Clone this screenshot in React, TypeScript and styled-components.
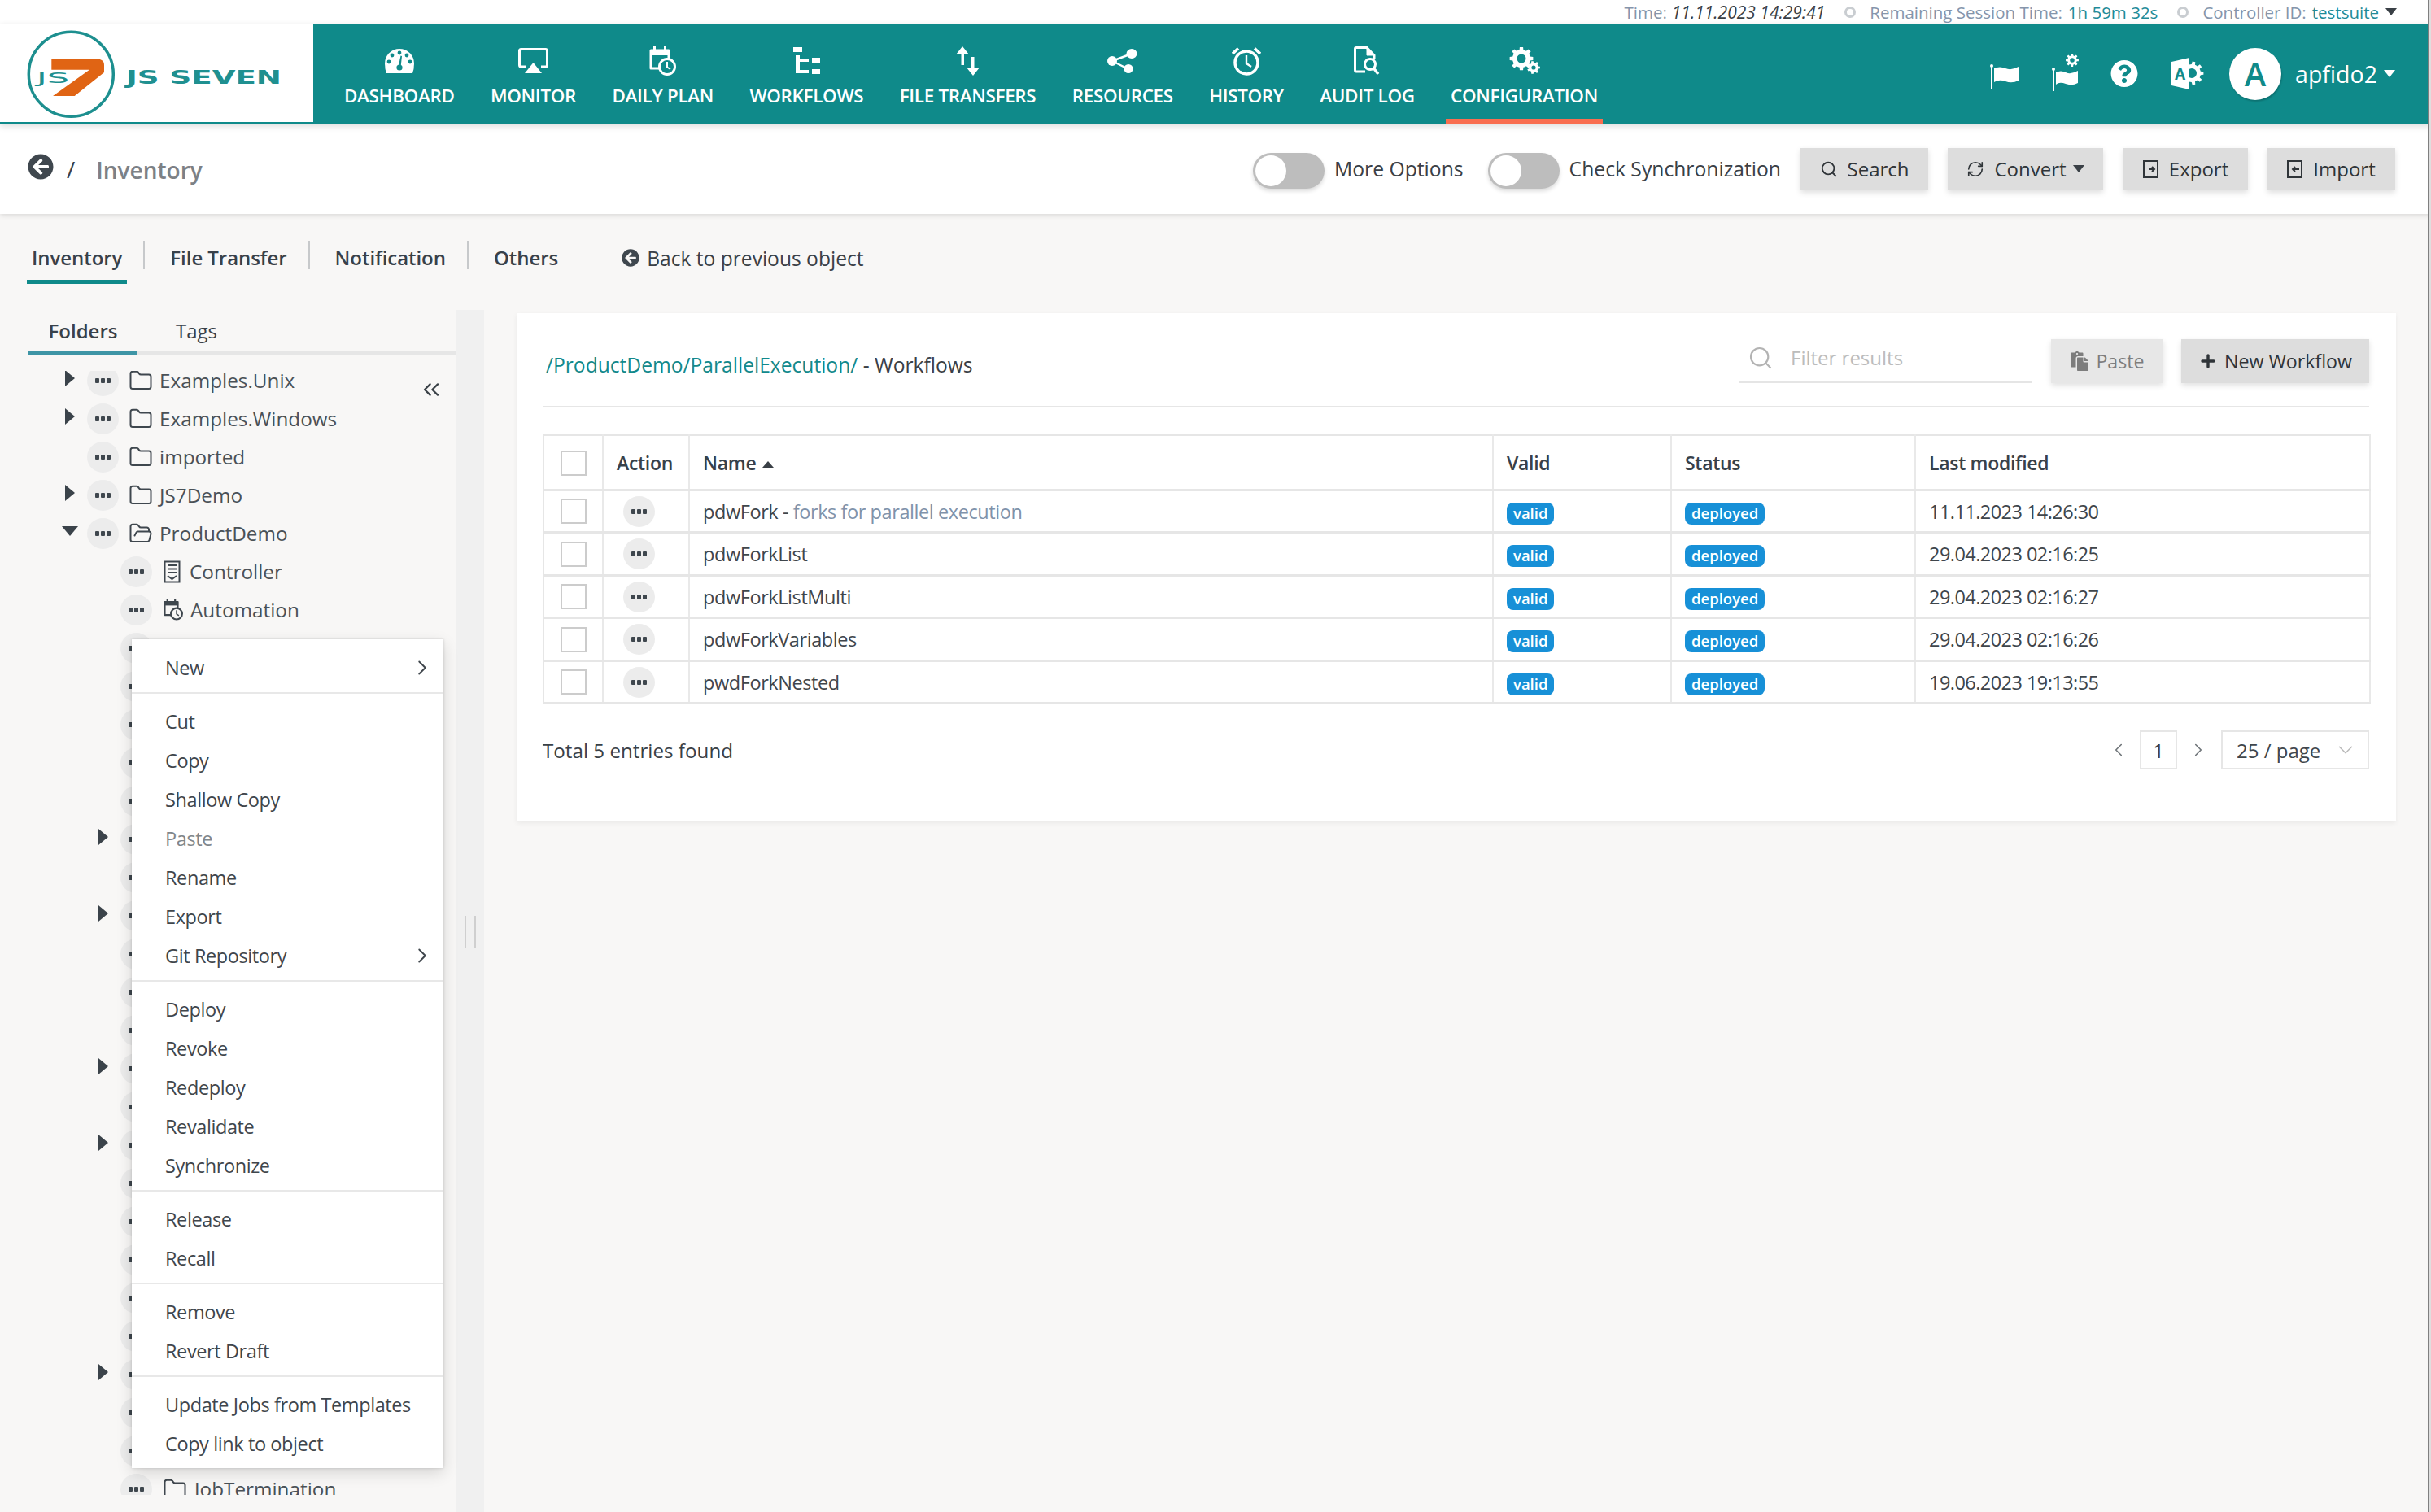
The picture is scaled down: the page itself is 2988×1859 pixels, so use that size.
import React from "react";
import styled, { createGlobalStyle } from "styled-components";
import { Search, RefreshCw, ChevronRight, ChevronLeft, ChevronDown, ChevronsLeft, Folder, FolderOpen, Plus } from "lucide-react";
import { FaArrowCircleLeft, FaQuestionCircle, FaPaste } from "react-icons/fa";

const TEAL = "#0f8a8a";

const Global = createGlobalStyle`
  html, body { margin: 0; padding: 0; background: #f8f7f6; overflow: hidden; }
  * { box-sizing: border-box; }
  body { font-family: "Open Sans", "Liberation Sans", sans-serif; font-size: 24px; color: #3a4046; }
`;

const Page = styled.div`
  position: relative;
  width: 2988px;
  height: 1859px;
  display: flex;
  flex-direction: column;
  overflow: hidden;
  background: #f8f7f6;
`;

/* top status strip */
const TopBar = styled.div`
  height: 29px;
  background: #fff;
  display: flex;
  align-items: center;
  justify-content: flex-end;
  padding-right: 42px;
  font-size: 20.5px;
  color: #8595ab;
  white-space: nowrap;
`;
const TimeValue = styled.i`
  color: #3a4046;
  margin-left: 6px;
  font-size: 21px;
`;
const StatusDot = styled.span`
  width: 14px;
  height: 14px;
  border-radius: 50%;
  border: 3px solid #c9cdd1;
  margin: 0 17px 0 24px;
`;
const TealValue = styled.span`
  color: #1f8b98;
  margin-left: 7px;
`;
const TinyCaret = styled.span<{ $c?: string; $ml?: number }>`
  width: 0;
  height: 0;
  border-left: 7px solid transparent;
  border-right: 7px solid transparent;
  border-top: 9px solid ${(p) => p.$c || "#3a4046"};
  margin-left: ${(p) => (p.$ml === undefined ? 8 : p.$ml)}px;
`;

/* header */
const Header = styled.header`
  height: 123px;
  display: flex;
  background: ${TEAL};
  box-shadow: 0 3px 8px rgba(0, 0, 0, 0.15);
  position: relative;
  z-index: 2;
`;
const LogoBox = styled.div`
  width: 385px;
  background: #fff;
  border-bottom: 2px solid ${TEAL};
  display: flex;
`;
const LogoSvg = styled.svg`
  width: 385px;
  height: 121px;
`;
const Nav = styled.nav`
  display: flex;
  gap: 32.4px;
  padding-left: 32px;
  flex: 1;
`;
const NavItem = styled.a<{ $active?: boolean }>`
  display: flex;
  flex-direction: column;
  align-items: center;
  padding: 27px 6px 0;
  height: 123px;
  color: #fff;
  border-bottom: 6px solid ${(p) => (p.$active ? "#f96e50" : "transparent")};
`;
const NavIcon = styled.div`
  height: 37px;
  display: flex;
  align-items: center;
  justify-content: center;
`;
const NavLabel = styled.span`
  margin-top: 10px;
  font-size: 22.4px;
  line-height: 30px;
  font-weight: 600;
  letter-spacing: -0.3px;
  white-space: nowrap;
`;
const NavRight = styled.div`
  display: flex;
  align-items: center;
  padding-right: 44px;
  color: #fff;
`;
const IconSlot = styled.div<{ $w: number; $mr: number; $mt?: number }>`
  width: ${(p) => p.$w}px;
  margin-right: ${(p) => p.$mr}px;
  margin-top: ${(p) => p.$mt || 0}px;
  display: flex;
  justify-content: center;
`;
const Avatar = styled.div`
  width: 64px;
  height: 64px;
  border-radius: 50%;
  background: #fff;
  color: ${TEAL};
  font-size: 40px;
  font-weight: 600;
  display: flex;
  align-items: center;
  justify-content: center;
  box-shadow: 1px 2px 2px rgba(0, 0, 0, 0.18);
  margin-right: 17px;
`;
const UserName = styled.span`
  font-size: 28.5px;
  color: #fff;
`;

/* sub bar */
const SubBar = styled.div`
  height: 111px;
  background: #fff;
  display: flex;
  align-items: center;
  box-shadow: 0 2px 6px rgba(0, 0, 0, 0.12);
  padding: 0 44px 0 34px;
  position: relative;
  z-index: 1;
`;
const BackIcon = styled(FaArrowCircleLeft)`
  width: 32px;
  height: 32px;
  color: #3f474e;
  margin-top: -6px;
`;
const Slash = styled.span`
  margin: 0 26px 0 16px;
  font-size: 28px;
  color: #3a4046;
`;
const CrumbTitle = styled.span`
  font-size: 28px;
  color: #7c8186;
  font-weight: 600;
  margin-top: 3px;
`;
const Spacer = styled.div`
  flex: 1;
`;
const Toggle = styled.div`
  width: 88px;
  height: 44px;
  border-radius: 22px;
  background: #bdbdbd;
  box-shadow: 0 3px 5px rgba(0, 0, 0, 0.14);
  padding: 3px;
  margin-top: 4px;
  display: flex;
`;
const Knob = styled.div`
  width: 38px;
  height: 38px;
  border-radius: 50%;
  background: #fff;
`;
const ToggleLabel = styled.span<{ $mr: number }>`
  font-size: 24.7px;
  margin: 0 ${(p) => p.$mr}px 0 12px;
  color: #3a4046;
  white-space: nowrap;
`;
const ToolButton = styled.button<{ $w: number; $mr?: number }>`
  width: ${(p) => p.$w}px;
  height: 52px;
  margin-right: ${(p) => p.$mr || 0}px;
  border: 0;
  background: #ddd;
  font: 400 24px "Open Sans", sans-serif;
  color: #2f3438;
  display: flex;
  align-items: center;
  justify-content: center;
  gap: 12px;
  padding: 0;
  box-shadow: 0 3px 7px rgba(0, 0, 0, 0.13);
  white-space: nowrap;
`;

/* tabs */
const Tabs = styled.div`
  display: flex;
  align-items: flex-start;
  padding: 33px 0 0 33px;
`;
const Tab = styled.a<{ $active?: boolean }>`
  height: 53px;
  padding: 4px 6px 0;
  line-height: 34px;
  font-size: 24px;
  font-weight: 600;
  letter-spacing: -0.05px;
  color: #38414a;
  border-bottom: 5px solid ${(p) => (p.$active ? TEAL : "transparent")};
`;
const TabDivider = styled.span`
  width: 2px;
  height: 35px;
  background: #c7c9cb;
  margin: 0 25px 0 20px;
`;
const BackLink = styled.a`
  display: flex;
  align-items: center;
  gap: 9px;
  margin-left: 72px;
  height: 42px;
  font-size: 24.6px;
  color: #3a4046;
`;
const SmallBack = styled(FaArrowCircleLeft)`
  width: 22px;
  height: 22px;
  color: #3f474e;
`;

/* main */
const Main = styled.div`
  flex: 1;
  display: flex;
  margin-top: 32px;
  min-height: 0;
`;
const LeftPanel = styled.aside`
  position: relative;
  width: 561px;
  padding-left: 35px;
  flex: none;
`;
const SideTabs = styled.div`
  display: flex;
  height: 55px;
  border-bottom: 4px solid #e6e6e6;
`;
const SideTab = styled.a<{ $active?: boolean }>`
  width: ${(p) => (p.$active ? 134 : 145)}px;
  height: 55px;
  text-align: center;
  line-height: 52px;
  font-size: 24px;
  font-weight: ${(p) => (p.$active ? 600 : 400)};
  color: #38414a;
  border-bottom: 4px solid ${(p) => (p.$active ? "#3e95a6" : "transparent")};
`;
const TreeClip = styled.div`
  margin: 20px 0 0 -35px;
  height: 1382px;
  overflow: hidden;
`;
const TreeList = styled.div`
  margin-top: -12px;
`;
const TreeRow = styled.div<{ $level: number }>`
  height: 47px;
  display: flex;
  align-items: center;
  padding-left: ${(p) => 78 + p.$level * 41}px;
  font-size: 24.3px;
  line-height: 20px;
  color: #4a5157;
  white-space: nowrap;
`;
const CaretBox = styled.div`
  width: 29px;
  height: 20px;
  display: flex;
  align-items: center;
  padding-left: 2px;
  margin-top: -6px;
`;
const CaretRight = styled.span`
  width: 0;
  height: 0;
  border-top: 10px solid transparent;
  border-bottom: 10px solid transparent;
  border-left: 12px solid #3b434a;
`;
const CaretDown = styled.span`
  width: 0;
  height: 0;
  margin-left: -4px;
  border-left: 10px solid transparent;
  border-right: 10px solid transparent;
  border-top: 12px solid #3b434a;
`;
const MoreBtn = styled.span`
  flex: none;
  width: 39px;
  height: 38px;
  border-radius: 50%;
  background: #ececec;
  display: inline-flex;
  align-items: center;
  justify-content: center;
  vertical-align: middle;
  gap: 2px;
`;
const Dot = styled.i`
  width: 5px;
  height: 6px;
  border-radius: 1px;
  background: #3f474e;
`;
const TreeIcon = styled.span<{ $ml: number; $mr: number }>`
  display: inline-flex;
  margin: 0 ${(p) => p.$mr}px 0 ${(p) => p.$ml}px;
  color: #3f474e;
`;
const Collapse = styled(ChevronsLeft)`
  position: absolute;
  left: 514px;
  top: 80px;
  width: 32px;
  height: 36px;
  color: #3a4147;
`;
const Gutter = styled.div`
  width: 34px;
  flex: none;
  background: #f0f0f0;
  display: flex;
  justify-content: center;
  gap: 10px;
  padding-top: 745px;
`;
const GripBar = styled.i`
  width: 2px;
  height: 40px;
  background: #cfcfcf;
`;

/* card */
const Card = styled.section`
  margin: 4px 43px 0 40px;
  flex: 1;
  min-width: 0;
  height: 625px;
  background: #fff;
  padding: 0 33px 0 32px;
  box-shadow: 0 2px 6px rgba(0, 0, 0, 0.06);
`;
const CardHead = styled.div`
  height: 116px;
  border-bottom: 2px solid #e6e6e6;
  display: flex;
  align-items: flex-start;
  padding: 32px 0 0 4px;
`;
const CardTitle = styled.div`
  font-size: 24.6px;
  line-height: 34px;
  color: #3a4046;
  flex: 1;
  margin-top: 15px;
`;
const PathLink = styled.a`
  color: #12898c;
`;
const FilterBox = styled.div`
  width: 359px;
  height: 54px;
  margin-right: 24px;
  border-bottom: 2px solid #e5e5e5;
  display: flex;
  align-items: center;
  padding: 0 0 7px 10px;
  gap: 18px;
  color: #b3b3b3;
`;
const FilterInput = styled.input`
  border: 0;
  outline: 0;
  width: 280px;
  font: 400 24px "Open Sans", sans-serif;
  background: transparent;
  padding-left: 3px;
  &::placeholder {
    color: #bcbcbc;
  }
`;
const CardButton = styled.button<{ $w: number; $muted?: boolean; $mr?: number }>`
  width: ${(p) => p.$w}px;
  height: 54px;
  margin-right: ${(p) => p.$mr || 0}px;
  border: 0;
  padding: 0;
  background: ${(p) => (p.$muted ? "#e7e7e7" : "#ddd")};
  color: ${(p) => (p.$muted ? "#7d7d7d" : "#2f3438")};
  font: 400 23.2px "Open Sans", sans-serif;
  display: flex;
  align-items: center;
  justify-content: center;
  gap: 8px;
  box-shadow: 0 3px 7px rgba(0, 0, 0, 0.12);
  white-space: nowrap;
`;
const Table = styled.table`
  margin-top: 33px;
  width: 100%;
  border-collapse: collapse;
  table-layout: fixed;
  border: 2px solid #e6e6e6;
`;
const Th = styled.th<{ $w: number }>`
  width: ${(p) => p.$w}px;
  height: 67px;
  padding: 2px 16px 0;
  text-align: left;
  font-size: 23px;
  font-weight: 600;
  letter-spacing: -0.3px;
  color: #38414a;
  border-right: 2px solid #e9e9e9;
  border-bottom: 3px solid #e6e6e6;
  white-space: nowrap;
`;
const Td = styled.td`
  height: 52.5px;
  padding: 1px 16px 0;
  font-size: 23.5px;
  letter-spacing: -0.42px;
  color: #3f464c;
  border-right: 2px solid #e9e9e9;
  border-bottom: 3px solid #e6e6e6;
  white-space: nowrap;
`;
const ActionTd = styled(Td)`
  padding-left: 24px;
`;
const DateTd = styled(Td)`
  letter-spacing: -0.55px;
`;
const SortUp = styled.span`
  display: inline-block;
  width: 0;
  height: 0;
  margin-left: 8px;
  vertical-align: 3px;
  border-left: 7px solid transparent;
  border-right: 7px solid transparent;
  border-bottom: 8px solid #3a4046;
`;
const Check = styled.span`
  display: block;
  width: 32px;
  height: 31px;
  border: 2px solid #cccccc;
  margin: 0 auto;
  background: #fff;
`;
const Desc = styled.span`
  color: #8092aa;
`;
const Badge = styled.span`
  display: inline-block;
  height: 27px;
  line-height: 25px;
  padding: 0 8px;
  border-radius: 8px;
  background: #1790d7;
  color: #fff;
  font-size: 18.5px;
  letter-spacing: 0;
  font-weight: 600;
  vertical-align: middle;
`;
const Footer = styled.div`
  margin-top: 32px;
  display: flex;
  align-items: center;
`;
const FootText = styled.span`
  flex: 1;
  font-size: 24.2px;
  color: #3a4046;
`;
const PageNav = styled.span`
  display: flex;
  color: #6f7579;
  width: 26px;
  justify-content: center;
`;
const PageNum = styled.span`
  width: 46px;
  height: 48px;
  border: 2px solid #e6e6e6;
  display: flex;
  align-items: center;
  justify-content: center;
  margin: 0 13px;
  font-size: 24px;
`;
const PageSize = styled.span`
  width: 182px;
  height: 48px;
  margin-left: 15px;
  border: 2px solid #e6e6e6;
  display: flex;
  align-items: center;
  justify-content: space-between;
  padding: 0 12px 0 17px;
  font-size: 24px;
  color: #b9b9b9;
`;
const PageSizeText = styled.span`
  color: #3f464c;
`;

/* context menu */
const Menu = styled.div`
  position: absolute;
  left: 162px;
  top: 786px;
  width: 383px;
  background: #fff;
  box-shadow: 0 0 3px rgba(0, 0, 0, 0.16), 0 6px 18px rgba(0, 0, 0, 0.14);
  z-index: 3;
`;
const MenuGroup = styled.div<{ $first?: boolean; $last?: boolean }>`
  padding: ${(p) => (p.$first ? 10 : 9)}px 0 7px;
  border-bottom: ${(p) => (p.$last ? "0" : "2px solid #e8e8e8")};
`;
const MenuItem = styled.div<{ $disabled?: boolean }>`
  height: 48px;
  display: flex;
  align-items: center;
  justify-content: space-between;
  padding: 1px 11px 0 41px;
  font-size: 23.5px;
  letter-spacing: -0.4px;
  color: ${(p) => (p.$disabled ? "#80868b" : "#3f464c")};
`;
const EdgeLine = styled.div`
  position: absolute;
  right: 0;
  top: 0;
  width: 4px;
  height: 100%;
  background: #dedede;
  border-left: 2px solid #7f7f7f;
  z-index: 5;
`;

/* ---------- drawings ---------- */
function gearPath(cx: number, cy: number, ro: number, ri: number, hole: number, teeth: number) {
  let d = "";
  const step = (Math.PI * 2) / teeth;
  for (let i = 0; i < teeth; i++) {
    const a = i * step;
    const pts: [number, number][] = [
      [ri, a - step * 0.5],
      [ri, a - step * 0.28],
      [ro, a - step * 0.18],
      [ro, a + step * 0.18],
      [ri, a + step * 0.28],
    ];
    for (const [r, t] of pts) {
      d += `${d ? "L" : "M"}${(cx + r * Math.cos(t)).toFixed(2)} ${(cy + r * Math.sin(t)).toFixed(2)}`;
    }
  }
  d += `Z M${cx + hole} ${cy} A${hole} ${hole} 0 1 0 ${cx - hole} ${cy} A${hole} ${hole} 0 1 0 ${cx + hole} ${cy}Z`;
  return d;
}

const Logo = () => (
  <LogoSvg viewBox="0 0 385 121">
    <circle cx="87.3" cy="62.3" r="52" fill="none" stroke="#1d8f8f" strokeWidth="3.5" />
    <path d="M63.3 43.3H118Q128 43.3 128 51V60L91.7 89H65L110 56.7H63.3Z" fill="#e06414" />
    <text x="45" y="73" fontFamily="DejaVu Sans" fontWeight="400" fontSize="18" fill="#1d8f8f" textLength="40" lengthAdjust="spacingAndGlyphs">JS</text>
    <text x="155" y="74" fontFamily="DejaVu Sans" fontWeight="700" fontSize="23.3" fill="#1f9090" textLength="191" lengthAdjust="spacingAndGlyphs">JS SEVEN</text>
  </LogoSvg>
);

const DashIcon = () => (
  <svg width="36" height="30" viewBox="0 0 36 30">
    <path d="M18 0A18 18 0 0 1 36 18Q36 25 34 30H2Q0 25 0 18A18 18 0 0 1 18 0Z" fill="#fff" />
    <g fill={TEAL}>
      <circle cx="18" cy="5" r="2.4" /><circle cx="9" cy="8" r="2.4" /><circle cx="27" cy="8" r="2.4" />
      <circle cx="5" cy="16" r="2.4" /><circle cx="31" cy="16" r="2.4" />
      <circle cx="18" cy="23" r="3.6" />
      <path d="M16.8 21L19.5 8.5L21 9L19.6 22Z" />
    </g>
  </svg>
);
const MonitorIcon = () => (
  <svg width="37" height="31" viewBox="0 0 37 31">
    <path d="M9 23H3.5Q1.5 23 1.5 21V3.5Q1.5 1.5 3.5 1.5H33.5Q35.5 1.5 35.5 3.5V21Q35.5 23 33.5 23H28" fill="none" stroke="#fff" strokeWidth="3" />
    <path d="M18.5 18L29 31H8Z" fill="#fff" />
  </svg>
);
const PlanIcon = ({ w = 33, h = 36, c = "#fff", bg = TEAL }: { w?: number; h?: number; c?: string; bg?: string }) => (
  <svg width={w} height={h} viewBox="0 0 33 36">
    <path d="M2 5H24V27H2Z" fill="none" stroke={c} strokeWidth="3" strokeLinejoin="round" />
    <rect x="1" y="4" width="24" height="7" fill={c} />
    <rect x="5" y="0" width="3" height="6" fill={c} /><rect x="18" y="0" width="3" height="6" fill={c} />
    <circle cx="22" cy="25" r="9.5" fill={bg} stroke={c} strokeWidth="3" />
    <path d="M22 19V25.5L26 28" fill="none" stroke={c} strokeWidth="2" />
  </svg>
);
const FlowIcon = () => (
  <svg width="33" height="33" viewBox="0 0 33 33" fill="#fff">
    <rect x="0" y="0" width="11" height="6" />
    <rect x="3" y="10" width="5" height="22" />
    <rect x="3" y="14" width="16" height="4" />
    <rect x="3" y="28" width="16" height="4" />
    <rect x="23" y="13" width="10" height="6" />
    <rect x="23" y="27" width="10" height="6" />
  </svg>
);
const TransferIcon = () => (
  <svg width="30" height="36" viewBox="0 0 30 36" fill="#fff">
    <path d="M8 0L16 10H10V23H6.5V10H0Z" />
    <path d="M21 36L13 26H19V13H22.5V26H29Z" />
  </svg>
);
const ShareIcon = () => (
  <svg width="37" height="30" viewBox="0 0 37 30">
    <path d="M6 15L30 6M6 15L26 25" stroke="#fff" strokeWidth="2.5" />
    <ellipse cx="6" cy="15" rx="6" ry="6" fill="#fff" />
    <ellipse cx="30" cy="6" rx="6.5" ry="6" fill="#fff" />
    <ellipse cx="26" cy="24.5" rx="5.5" ry="5.5" fill="#fff" />
  </svg>
);
const AlarmIcon = () => (
  <svg width="36" height="36" viewBox="0 0 36 36" fill="none" stroke="#fff">
    <circle cx="18" cy="20" r="14" strokeWidth="3.5" />
    <path d="M18 11V21L24 25" strokeWidth="2.4" />
    <path d="M1 9L8 2.5M35 9L28 2.5" strokeWidth="3.6" />
  </svg>
);
const AuditIcon = () => (
  <svg width="33" height="35" viewBox="0 0 33 35" fill="none" stroke="#fff">
    <path d="M14 31H3Q1.5 31 1.5 29V3Q1.5 1.5 3 1.5H16L25 11V15" strokeWidth="3" />
    <path d="M16 1.5V11H25Z" fill="#fff" strokeWidth="1" />
    <circle cx="20" cy="22" r="6.5" strokeWidth="3" />
    <path d="M24.5 27L30 34" strokeWidth="3.4" />
  </svg>
);
const GearsIcon = () => (
  <svg width="38" height="33" viewBox="0 0 38 33">
    <path d={gearPath(15, 14, 14.5, 11, 5.5, 8)} fill="#fff" fillRule="evenodd" />
    <path d={gearPath(30, 25, 8, 5.8, 2.6, 7)} fill="#fff" fillRule="evenodd" />
  </svg>
);
const FlagIcon = ({ w = 35, h = 32 }: { w?: number; h?: number }) => (
  <svg width={w} height={h} viewBox="0 0 35 32">
    <circle cx="2" cy="3" r="2" fill="#fff" />
    <rect x="1" y="3" width="2" height="29" fill="#fff" />
    <path d="M5 6Q12 3 19 6T35 4V21Q27 25 19 22T5 23Z" fill="#fff" />
  </svg>
);
const FlagGearIcon = () => (
  <svg width="34" height="46" viewBox="0 0 34 46">
    <path d={gearPath(25, 8, 8, 5.8, 2.8, 8)} fill="#fff" fillRule="evenodd" />
    <circle cx="2" cy="19" r="2" fill="#fff" />
    <rect x="1" y="19" width="2" height="27" fill="#fff" />
    <path d="M5 23Q11 20 17 23T32 21V36Q25 40 17 37T5 38Z" fill="#fff" />
  </svg>
);
const OfficeIcon = () => (
  <svg width="40" height="39" viewBox="0 0 40 39">
    <path d={gearPath(25, 19, 14.5, 11, 6, 9)} fill="#fff" fillRule="evenodd" />
    <path d="M0 5L22 0V39L0 34Z" fill="#fff" />
    <text x="4" y="27" fontFamily="Open Sans" fontWeight="700" fontSize="19" fill={TEAL}>A</text>
  </svg>
);
const BoxOutIcon = ({ dir }: { dir: "out" | "in" }) => (
  <svg width="20" height="22" viewBox="0 0 20 22" fill="none" stroke="#2f3438" strokeWidth="2">
    <path d="M1 1H18V21H1ZM1 1V21" />
    {dir === "out" ? <path d="M7 11H14M11 8L14 11L11 14" /> : <path d="M15 11H7M10 8L7 11L10 14" />}
  </svg>
);
const ControllerIcon = () => (
  <svg width="21" height="28" viewBox="0 0 21 28" fill="none" stroke="#3f474e" strokeWidth="2">
    <path d="M1.5 1.5H19.5V26.5H1.5Z" />
    <path d="M5 6H16M5 10.5H16M5 15H16" />
    <path d="M5 19L10.5 23L16 19" />
  </svg>
);

const Dots = () => (
  <MoreBtn>
    <Dot /><Dot /><Dot />
  </MoreBtn>
);

const navItems: [string, React.ReactNode][] = [
  ["DASHBOARD", <DashIcon />],
  ["MONITOR", <MonitorIcon />],
  ["DAILY PLAN", <PlanIcon />],
  ["WORKFLOWS", <FlowIcon />],
  ["FILE TRANSFERS", <TransferIcon />],
  ["RESOURCES", <ShareIcon />],
  ["HISTORY", <AlarmIcon />],
  ["AUDIT LOG", <AuditIcon />],
  ["CONFIGURATION", <GearsIcon />],
];

const rows = [
  ["pdwFork", "forks for parallel execution", "11.11.2023 14:26:30"],
  ["pdwForkList", "", "29.04.2023 02:16:25"],
  ["pdwForkListMulti", "", "29.04.2023 02:16:27"],
  ["pdwForkVariables", "", "29.04.2023 02:16:26"],
  ["pwdForkNested", "", "19.06.2023 19:13:55"],
];

const menuGroups: string[][] = [
  ["New"],
  ["Cut", "Copy", "Shallow Copy", "Paste", "Rename", "Export", "Git Repository"],
  ["Deploy", "Revoke", "Redeploy", "Revalidate", "Synchronize"],
  ["Release", "Recall"],
  ["Remove", "Revert Draft"],
  ["Update Jobs from Templates", "Copy link to object"],
];

const hiddenCarets = [5, 7, 11, 13, 19];

export default function App() {
  return (
    <Page>
      <Global />
      <TopBar>
        Time:<TimeValue>11.11.2023 14:29:41</TimeValue>
        <StatusDot />
        Remaining Session Time:<TealValue>1h 59m 32s</TealValue>
        <StatusDot />
        Controller ID:<TealValue>testsuite</TealValue>
        <TinyCaret />
      </TopBar>
      <Header>
        <LogoBox><Logo /></LogoBox>
        <Nav>
          {navItems.map(([label, icon]) => (
            <NavItem key={label} $active={label === "CONFIGURATION"}>
              <NavIcon>{icon}</NavIcon>
              <NavLabel>{label}</NavLabel>
            </NavItem>
          ))}
        </Nav>
        <NavRight>
          <IconSlot $w={35} $mr={41} $mt={6}><FlagIcon /></IconSlot>
          <IconSlot $w={34} $mr={38} $mt={-3}><FlagGearIcon /></IconSlot>
          <IconSlot $w={34} $mr={41}><FaQuestionCircle size={35} /></IconSlot>
          <IconSlot $w={40} $mr={31}><OfficeIcon /></IconSlot>
          <Avatar>A</Avatar>
          <UserName>apfido2</UserName>
          <TinyCaret $c="#fff" />
        </NavRight>
      </Header>
      <SubBar>
        <BackIcon />
        <Slash>/</Slash>
        <CrumbTitle>Inventory</CrumbTitle>
        <Spacer />
        <Toggle><Knob /></Toggle>
        <ToggleLabel $mr={30}>More Options</ToggleLabel>
        <Toggle><Knob /></Toggle>
        <ToggleLabel $mr={24}>Check Synchronization</ToggleLabel>
        <ToolButton $w={157} $mr={24}><Search size={22} strokeWidth={2} />Search</ToolButton>
        <ToolButton $w={191} $mr={25}><RefreshCw size={22} strokeWidth={1.8} />Convert<TinyCaret $ml={-4} /></ToolButton>
        <ToolButton $w={153} $mr={24}><BoxOutIcon dir="out" />Export</ToolButton>
        <ToolButton $w={157}><BoxOutIcon dir="in" />Import</ToolButton>
      </SubBar>
      <Tabs>
        <Tab $active>Inventory</Tab>
        <TabDivider />
        <Tab>File Transfer</Tab>
        <TabDivider />
        <Tab>Notification</Tab>
        <TabDivider />
        <Tab>Others</Tab>
        <BackLink><SmallBack />Back to previous object</BackLink>
      </Tabs>
      <Main>
        <LeftPanel>
          <SideTabs>
            <SideTab $active>Folders</SideTab>
            <SideTab>Tags</SideTab>
          </SideTabs>
          <Collapse strokeWidth={1.7} />
          <TreeClip>
            <TreeList>
              {["Examples.Unix", "Examples.Windows", "imported", "JS7Demo"].map((n, i) => (
                <TreeRow $level={0} key={n}>
                  <CaretBox>{i !== 2 && <CaretRight />}</CaretBox>
                  <Dots />
                  <TreeIcon $ml={12} $mr={8}><Folder size={30} strokeWidth={1.6} /></TreeIcon>
                  {n}
                </TreeRow>
              ))}
              <TreeRow $level={0}>
                <CaretBox><CaretDown /></CaretBox>
                <Dots />
                <TreeIcon $ml={12} $mr={8}><FolderOpen size={30} strokeWidth={1.6} /></TreeIcon>
                ProductDemo
              </TreeRow>
              <TreeRow $level={1}>
                <CaretBox />
                <Dots />
                <TreeIcon $ml={14} $mr={11}><ControllerIcon /></TreeIcon>
                Controller
              </TreeRow>
              <TreeRow $level={1}>
                <CaretBox />
                <Dots />
                <TreeIcon $ml={14} $mr={9}><PlanIcon w={24} h={27} c="#3f474e" bg="#f8f7f6" /></TreeIcon>
                Automation
              </TreeRow>
              {Array.from({ length: 22 }, (_, i) => (
                <TreeRow $level={1} key={i}>
                  <CaretBox>{hiddenCarets.includes(i) && <CaretRight />}</CaretBox>
                  <Dots />
                </TreeRow>
              ))}
              <TreeRow $level={1}>
                <CaretBox />
                <Dots />
                <TreeIcon $ml={13} $mr={9}><Folder size={30} strokeWidth={1.6} /></TreeIcon>
                JobTermination
              </TreeRow>
            </TreeList>
          </TreeClip>
        </LeftPanel>
        <Gutter><GripBar /><GripBar /></Gutter>
        <Card>
          <CardHead>
            <CardTitle><PathLink>/ProductDemo/ParallelExecution/</PathLink> - Workflows</CardTitle>
            <FilterBox>
              <Search size={32} strokeWidth={1.6} />
              <FilterInput placeholder="Filter results" />
            </FilterBox>
            <CardButton $w={138} $mr={22} $muted><FaPaste size={24} />Paste</CardButton>
            <CardButton $w={231}><Plus size={24} strokeWidth={3.4} />New Workflow</CardButton>
          </CardHead>
          <Table>
            <thead>
              <tr>
                <Th $w={73}><Check /></Th>
                <Th $w={106}>Action</Th>
                <Th $w={988}>Name<SortUp /></Th>
                <Th $w={219}>Valid</Th>
                <Th $w={300}>Status</Th>
                <Th $w={559}>Last modified</Th>
              </tr>
            </thead>
            <tbody>
              {rows.map(([name, desc, date]) => (
                <tr key={name}>
                  <Td><Check /></Td>
                  <ActionTd><Dots /></ActionTd>
                  <Td>
                    {name}
                    {desc && <> - <Desc>{desc}</Desc></>}
                  </Td>
                  <Td><Badge>valid</Badge></Td>
                  <Td><Badge>deployed</Badge></Td>
                  <DateTd>{date}</DateTd>
                </tr>
              ))}
            </tbody>
          </Table>
          <Footer>
            <FootText>Total 5 entries found</FootText>
            <PageNav><ChevronLeft size={30} strokeWidth={1.5} /></PageNav>
            <PageNum>1</PageNum>
            <PageNav><ChevronRight size={30} strokeWidth={1.5} /></PageNav>
            <PageSize>
              <PageSizeText>25 / page</PageSizeText>
              <ChevronDown size={30} strokeWidth={1.2} />
            </PageSize>
          </Footer>
        </Card>
      </Main>
      <Menu>
        {menuGroups.map((g, gi) => (
          <MenuGroup key={gi} $first={gi === 0} $last={gi === menuGroups.length - 1}>
            {g.map((it) => (
              <MenuItem key={it} $disabled={it === "Paste"}>
                {it}
                {(it === "New" || it === "Git Repository") && <ChevronRight size={30} strokeWidth={1.5} />}
              </MenuItem>
            ))}
          </MenuGroup>
        ))}
      </Menu>
      <EdgeLine />
    </Page>
  );
}
